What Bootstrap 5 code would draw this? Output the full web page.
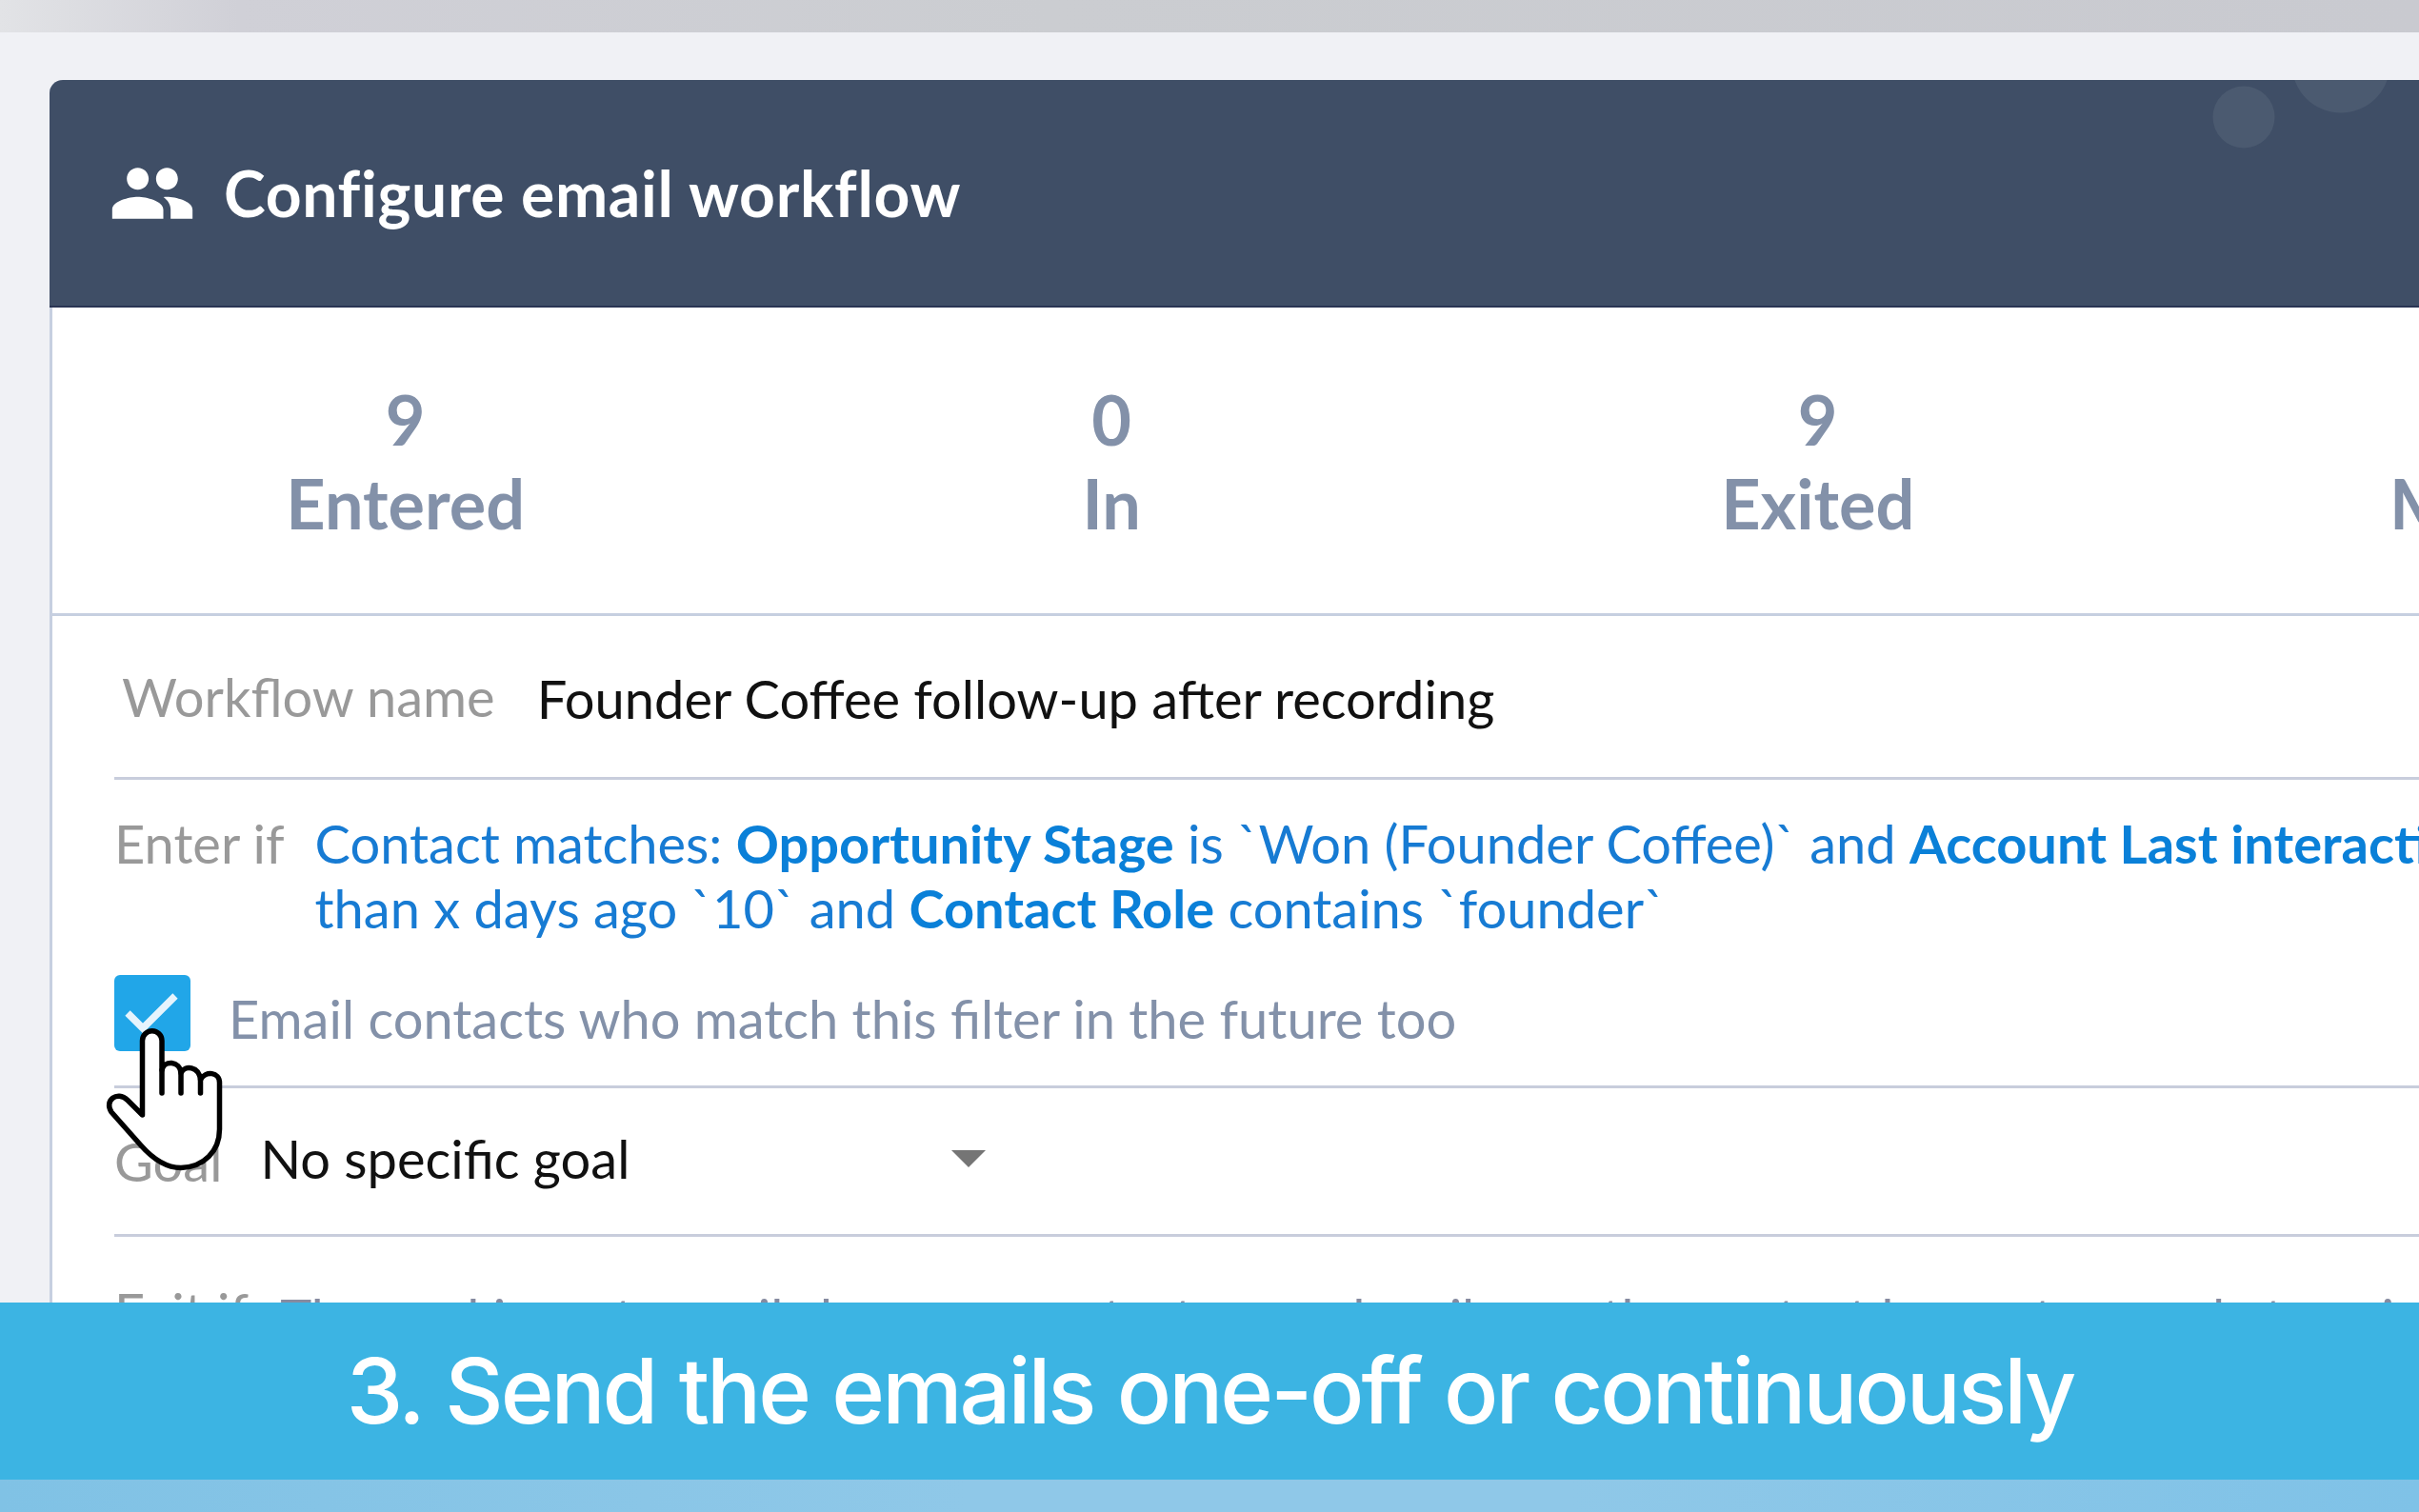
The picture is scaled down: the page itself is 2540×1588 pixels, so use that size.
<!DOCTYPE html>
<html lang="en">
<head>
<meta charset="utf-8">
<meta name="viewport" content="width=device-width, initial-scale=1">
<title>Configure email workflow</title>
<link href="https://cdn.jsdelivr.net/npm/bootstrap@5.3.0/dist/css/bootstrap.min.css" rel="stylesheet">
<style>
  html, body { height: 100%; }
  body { font-family: Lato, "Open Sans", sans-serif; font-size: 56px; line-height: 68px; color: #111; background: #f0f1f5; overflow: hidden; }
  .screen { width: 2540px; height: 1588px; }
  .top-strip { height: 34px; background: linear-gradient(90deg, #e2e3e6 0, #d0d0d7 250px, #cbcdd1 1100px, #c9cad0 100%); }
  .stage { height: 1334px; padding: 50px 0 0 52px; }
  .panel { width: 2972px; height: 1400px; border: 3px solid #c6cfe0; border-top: 0; border-radius: 14px 14px 0 0; --bs-card-bg: #fff; }
  .panel-head { height: 239px; margin-left: -3px; padding-left: 62px; background: #3f4e66; border-bottom: 2px solid #2a3554; border-radius: 14px 0 0 0; color: #fff; }
  .panel-head h1 { font-size: 66px; line-height: 80px; letter-spacing: .7px; margin: 1px 0 0 29px; }
  .bubbles { left: 2201px; top: 0; }
  .stats { height: 324px; padding-top: 73px; border-bottom: 3px solid #c6cfe0; color: #8391a9; font-size: 72px; line-height: 88px; }
  .field-row { margin-left: 65px; border-bottom: 3px solid #c8cddc; white-space: nowrap; }
  .field-name { color: #999; }
  .row-name { height: 172px; padding-left: 8px; }
  .name-value { margin-left: 44px; padding-top: 4px; }
  .row-enter { height: 324px; padding-top: 33px; }
  .row-goal { height: 156px; padding-bottom: 6px; }
  .row-exit { padding-top: 45px; border: 0; }
  .rule-link { color: #177bd3; margin-left: 32px; }
  .rule-link b { color: #0a80d8; }
  .future { color: #8391a9; margin-top: 35px; }
  .future-text { margin-left: 40px; padding-top: 13px; }
  .tick { width: 80px; height: 80px; border-radius: 6px; background: #21a6e8; }
  .goal-name { padding-top: 6px; }
  .goal-value { width: 726px; margin-left: 40px; }
  .exit-text { color: #868ba0; margin-left: 33px; padding-top: 6px; }
  .caption-bar { height: 186px; padding-left: 1px; background: #3cb4e3; color: #fff; font-family: Inter, sans-serif; font-weight: 500; font-size: 95px; line-height: 186px; letter-spacing: -3px; word-spacing: 2px; }
  .bottom-strip { height: 34px; background: linear-gradient(90deg, #80c2e5, #8fc8e8 40%, #8fc8e8 65%, #7fc2e7); }
  .pointer { left: 110px; top: 1077px; }
</style>
</head>
<body>
<div class="screen position-relative overflow-hidden d-flex flex-column">
  <div class="top-strip"></div>
  <main class="stage overflow-hidden">
    <section class="card panel">
      <header class="panel-head d-flex align-items-center position-relative overflow-hidden">
        <svg width="92" height="92" viewBox="0 0 24 24" fill="#fff"><path d="M16 11c1.66 0 2.99-1.34 2.99-3S17.66 5 16 5s-3 1.34-3 3 1.34 3 3 3zm-8 0c1.66 0 2.99-1.34 2.99-3S9.66 5 8 5 5 6.34 5 8s1.34 3 3 3zm0 2c-2.33 0-7 1.17-7 3.500V19h14v-2.500C15 14.170 10.330 13 8 13zm8 0c-.29 0-.62.020-.97.050 1.160.84 1.970 1.970 1.970 3.450V19h6v-2.500c0-2.330-4.670-3.500-7-3.500z"/></svg>
        <h1 class="fw-bold">Configure email workflow</h1>
        <svg class="bubbles position-absolute" width="300" height="90" fill="#4b5a70"><circle cx="103" cy="39" r="32.500"/><circle cx="205" cy="-17" r="51.500"/></svg>
      </header>
      <div class="stats row g-0 text-center fw-bold">
        <div class="col-3">9<br>Entered</div>
        <div class="col-3">0<br>In</div>
        <div class="col-3">9<br>Exited</div>
        <div class="col-3">0<br>Met goal</div>
      </div>
      <div class="field-row row-name d-flex align-items-center">
        <span class="field-name">Workflow name</span>
        <span class="name-value">Founder Coffee follow-up after recording</span>
      </div>
      <div class="field-row row-enter">
        <div class="d-flex">
          <span class="field-name">Enter if</span>
          <div class="rule-link">Contact matches: <b>Opportunity Stage</b> is `Won (Founder Coffee)` and <b>Account Last interaction</b> is more<br>than x days ago `10` and <b>Contact Role</b> contains `founder`</div>
        </div>
        <div class="future d-flex align-items-center">
          <span class="tick d-flex"><svg width="80" height="80" viewBox="0 0 80 80" fill="none" stroke="#e6f4fd" stroke-width="7.500"><path d="M14 40 L30 56 L64 22"/></svg></span>
          <span class="future-text">Email contacts who match this filter in the future too</span>
        </div>
      </div>
      <div class="field-row row-goal d-flex align-items-center">
        <span class="field-name goal-name">Goal</span>
        <span class="goal-value">No specific goal</span>
        <svg class="caret" width="36" height="18" viewBox="0 0 36 18" fill="#757575"><path d="M0 0H36L18 18z"/></svg>
      </div>
      <div class="field-row row-exit d-flex">
        <span class="field-name">Exit if</span>
        <span class="exit-text">The goal is met, emails bounce, contact moved mail now the contact has not moved at a mi</span>
      </div>
    </section>
  </main>
  <div class="caption-bar text-center">3. Send the emails one-off or continuously</div>
  <div class="bottom-strip"></div>
  <svg class="pointer position-absolute" width="128" height="160" viewBox="0 0 128 160" stroke="#000" stroke-width="5.500" stroke-linejoin="round" stroke-linecap="round" fill="none">
    <path fill="#fff" d="M60 47 V16 a10.250 10.250 0 0 0 -20.500 0 V94 L24 78.500 C13 68 -1 79 7 91 L38 126 C54 144 68 149.500 80 149.500 C104 149 120.500 132 120.500 109 V60 C120.500 49 106 47 100.500 57 C99 43 84 41 80 50 C79 37 62 36 60 47z"/>
    <path d="M60 47 V71 M80 50 V71 M100.500 57 V71"/>
  </svg>
</div>
<script src="https://cdn.jsdelivr.net/npm/bootstrap@5.3.0/dist/js/bootstrap.bundle.min.js"></script>
</body>
</html>
